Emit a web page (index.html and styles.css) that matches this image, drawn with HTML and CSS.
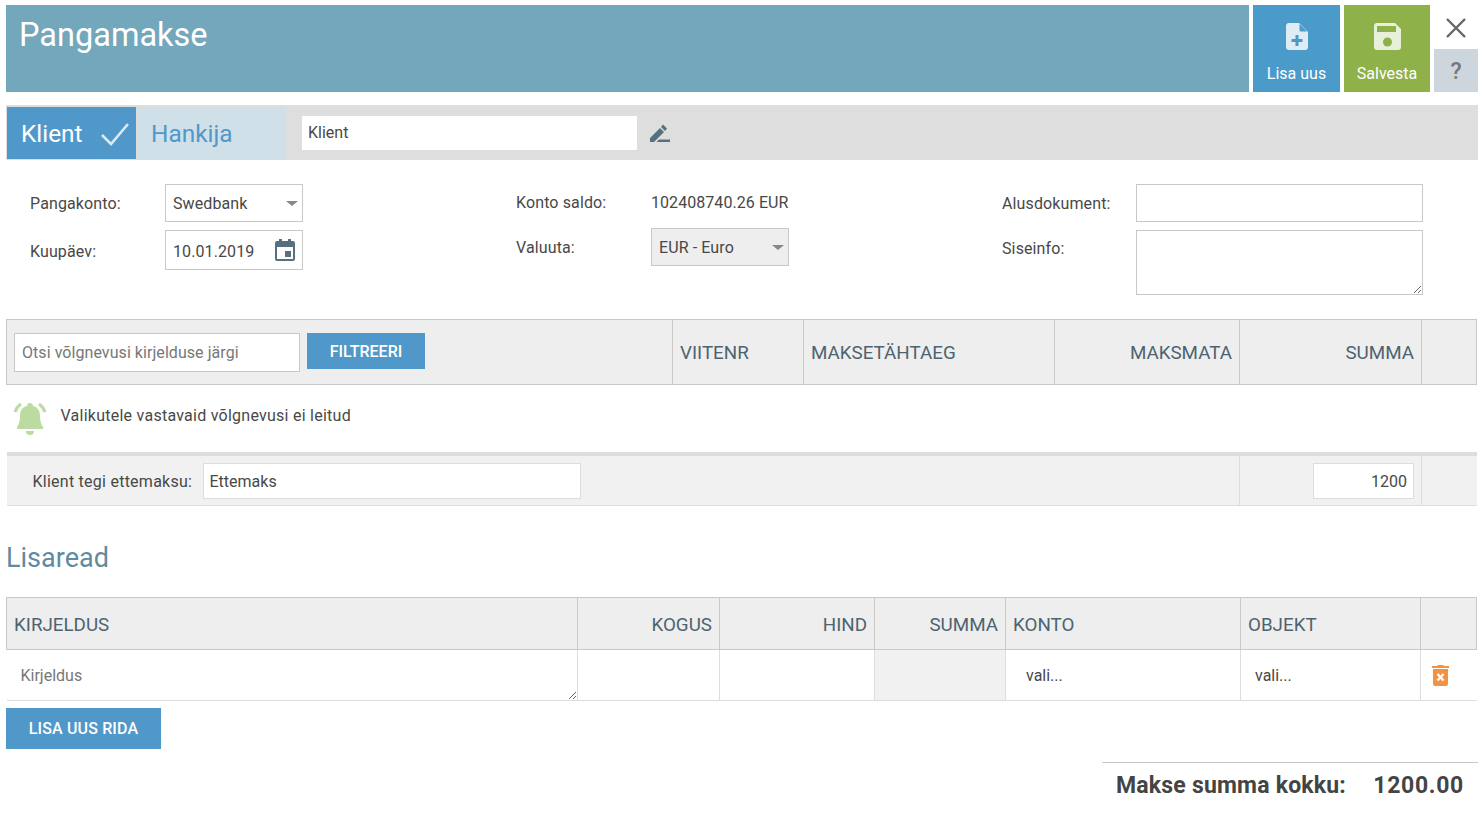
FILE: index.html
```html
<!DOCTYPE html>
<html>

<head>
	<title>Pangamakse</title>
	<meta charset="utf-8">
	<link rel="stylesheet" href="styles.css">
</head>

<body>
	<div class="main">
		<div class="top">
			<h1 class="title">Pangamakse</h1>
			<button class="action blue">
				<svg width="22" height="27" viewBox="0 0 22 27"><path fill="#deecf5" d="M3 0h10l9 9v15a3 3 0 0 1-3 3H3a3 3 0 0 1-3-3V3a3 3 0 0 1 3-3z"/><path fill="#4a9aca" d="M13.500 1l7.500 7.500h-6a1.500 1.500 0 0 1-1.500-1.500z"/><path fill="#4a9aca" d="M9.500 12h3v4h4v3h-4v4h-3v-4h-4v-3h4z"/></svg>
				<span>Lisa uus</span>
			</button>
			<button class="action green">
				<svg width="27" height="27" viewBox="0 0 27 27"><path fill="#e8f0da" d="M3 0h18l6 6v18a3 3 0 0 1-3 3H3a3 3 0 0 1-3-3V3a3 3 0 0 1 3-3z"/><rect fill="#8fb14a" x="3" y="3" width="19" height="6"/><circle fill="#8fb14a" cx="13.500" cy="19" r="4.500"/></svg>
				<span>Salvesta</span>
			</button>
			<div class="side">
				<div class="close">
					<svg width="20" height="20" viewBox="0 0 20 20"><path stroke="#666" stroke-width="2.4" fill="none" d="M1 1l18 18M19 1L1 19"/></svg>
				</div>
				<div class="help">?</div>
			</div>
		</div>

		<div class="tabs">
			<div class="tab on">
				<span>Klient</span>
				<svg width="30" height="24" viewBox="0 0 30 24"><path stroke="#dbe9f3" stroke-width="2.6" fill="none" d="M2 13l9 9L28 2"/></svg>
			</div>
			<div class="tab off">Hankija</div>
			<input class="tabname" type="text" value="Klient">
			<svg class="pen" width="20" height="18" viewBox="0 0 20 18"><path fill="#56707f" d="M0 14L10 4l4 4L4 18H0zM11 3l2-2.500 4 4-2 2.500zM9 15.500h11V18H6.500z"/></svg>
		</div>

		<div class="form">
			<div class="col c1">
				<div class="field f1">
					<label>Pangakonto:</label>
					<div class="select">Swedbank<i class="caret"></i></div>
				</div>
				<div class="field f2">
					<label>Kuupäev:</label>
					<div class="select date">10.01.2019
						<svg width="20" height="22" viewBox="0 0 20 22"><path fill="#56707f" d="M4 0h3v2h6V0h3v2h2a2 2 0 0 1 2 2v16a2 2 0 0 1-2 2H2a2 2 0 0 1-2-2V4a2 2 0 0 1 2-2h2zM2 8v12h16V8z"/><rect fill="#56707f" x="10" y="12" width="6" height="6"/></svg>
					</div>
				</div>
			</div>
			<div class="col c2">
				<div class="field f3">
					<label>Konto saldo:</label>
					<span class="saldo">102408740.26 EUR</span>
				</div>
				<div class="field f4">
					<label>Valuuta:</label>
					<div class="select grey">EUR - Euro<i class="caret"></i></div>
				</div>
			</div>
			<div class="col c3">
				<div class="field f1">
					<label>Alusdokument:</label>
					<input class="wide" type="text">
				</div>
				<div class="field f5">
					<label>Siseinfo:</label>
					<textarea class="wide area"></textarea>
				</div>
			</div>
		</div>

		<table class="grid debts">
			<colgroup>
				<col class="d1"><col class="d2"><col class="d3"><col class="d4"><col class="d5"><col>
			</colgroup>
			<tr class="head">
				<th class="tools">
					<div class="filter">
						<input class="search" type="text" placeholder="Otsi võlgnevusi kirjelduse järgi">
						<button class="btn">FILTREERI</button>
					</div>
				</th>
				<th>VIITENR</th>
				<th>MAKSETÄHTAEG</th>
				<th class="num">MAKSMATA</th>
				<th class="num">SUMMA</th>
				<th></th>
			</tr>
			<tr class="msg">
				<td colspan="6">
					<div class="notice">
						<svg width="34" height="33" viewBox="0 0 34 33"><g fill="#bcdba0"><path d="M17 1a3 3 0 0 1 3 3c5 1 7 5 7 10 0 5 1 8 3 11v2H4v-2c2-3 3-6 3-11 0-5 2-9 7-10a3 3 0 0 1 3-3z"/><path d="M13 29h8a4 4 0 0 1-8 0z"/></g><path stroke="#bcdba0" stroke-width="3" fill="none" d="M8 2C5 4 3 7 2 10M26 2c3 2 5 5 6 8"/></svg>
						<span>Valikutele vastavaid võlgnevusi ei leitud</span>
					</div>
				</td>
			</tr>
			<tr class="prepay">
				<td colspan="4">
					<div class="prepay-in">
						<label>Klient tegi ettemaksu:</label>
						<input class="prepay-text" type="text" value="Ettemaks">
					</div>
				</td>
				<td><input class="prepay-sum" type="text" value="1200"></td>
				<td></td>
			</tr>
		</table>

		<h2 class="sub">Lisaread</h2>

		<table class="grid extra">
			<colgroup>
				<col class="e1"><col class="e2"><col class="e3"><col class="e4"><col class="e5"><col class="e6"><col>
			</colgroup>
			<tr class="head2">
				<th>KIRJELDUS</th>
				<th class="num">KOGUS</th>
				<th class="num">HIND</th>
				<th class="num">SUMMA</th>
				<th>KONTO</th>
				<th>OBJEKT</th>
				<th></th>
			</tr>
			<tr class="line">
				<td class="desc"><textarea class="desc-in" placeholder="Kirjeldus"></textarea></td>
				<td></td>
				<td></td>
				<td class="shade"></td>
				<td class="pick p1">vali...</td>
				<td class="pick p2">vali...</td>
				<td class="trash">
					<svg width="17" height="22" viewBox="0 0 17 22"><path fill="#f59240" d="M1 5h15v15a2 2 0 0 1-2 2H3a2 2 0 0 1-2-2zM0 2h5l1-1h5l1 1h5v2H0z"/><path stroke="#fff" stroke-width="2.4" d="M5.500 10l6 6.500M11.500 10l-6 6.500"/></svg>
				</td>
			</tr>
		</table>

		<button class="btn addrow">LISA UUS RIDA</button>

		<div class="total">
			<span class="total-label">Makse summa kokku:</span>
			<span class="total-sum">1200.00</span>
		</div>
	</div>
</body>

</html>
```

FILE: styles.css
```css
html,
body {
	margin: 0;
	padding: 0;
	border: 0;
}

body {
	background: #fff;
	font-family: Roboto, sans-serif;
	font-size: 16px;
	color: #484848;
}

.main {
	display: flex;
	flex-direction: column;
	padding: 5px 4px 0 6px;
}

input,
textarea,
button {
	font-family: Roboto, sans-serif;
	box-sizing: border-box;
}

label {
	letter-spacing: 0.12px;
}

/* header */
.top {
	display: flex;
	gap: 4px;
	height: 87px;
}

.title {
	flex: 1 0 0;
	margin: 0;
	padding: 10px 13px;
	background: #72a7bc;
	color: #fff;
	font-size: 32.5px;
	font-weight: 400;
	line-height: 40px;
}

.action {
	display: flex;
	flex-direction: column;
	align-items: center;
	width: 87px;
	padding: 18px 0 0;
	border: 0;
	color: #fff;
	font-size: 16px;
}

.action span {
	margin-top: 14px;
	line-height: 20px;
}

.blue {
	background: #4a9aca;
}

.green {
	width: 86px;
	background: #8fb14a;
}

.side {
	display: flex;
	flex-direction: column;
	width: 44px;
}

.close {
	display: flex;
	flex: 0 0 44px;
	justify-content: center;
	align-items: center;
	box-sizing: border-box;
	padding-top: 2px;
}

.help {
	flex: 0 0 43px;
	overflow: hidden;
	background: #cdd5dd;
	color: #777;
	font-size: 23px;
	font-weight: 500;
	line-height: 45px;
	text-align: center;
}

/* tabs */
.tabs {
	display: flex;
	align-items: center;
	height: 55px;
	margin-top: 13px;
	background: #dedede;
}

.tab {
	display: flex;
	align-items: center;
	height: 52px;
	margin-top: 1px;
	padding-top: 1px;
	box-sizing: border-box;
	font-size: 24.4px;
}

.on {
	justify-content: space-between;
	width: 129px;
	margin-left: 1px;
	padding-left: 14px;
	padding-right: 6px;
	background: #5098c9;
	color: #fff;
}

.off {
	width: 149px;
	margin-left: 1px;
	padding-left: 14px;
	background: #cfe0e9;
	color: #5098c9;
}

.tabname {
	width: 335px;
	height: 34px;
	margin-left: 16px;
	padding: 0 6px;
	border: 0;
	background: #fff;
	color: #484848;
	font-size: 16px;
}

.pen {
	margin-left: 13px;
}

/* form */
.form {
	display: flex;
	height: 159px;
}

.col {
	display: flex;
	flex-direction: column;
}

.c1 {
	width: 510px;
	padding: 24px 0 0 24px;
	box-sizing: border-box;
}

.c2 {
	width: 486px;
	padding: 24px 0 0;
	box-sizing: border-box;
}

.c3 {
	padding: 24px 0 0;
}

.field {
	display: flex;
	align-items: center;
}

.c1 label {
	width: 135px;
}

.c2 label {
	width: 135px;
}

.c3 label {
	width: 134px;
}

.f1 {
	height: 38px;
	margin-bottom: 8px;
}

.f2 {
	height: 40px;
}

.f2 label {
	padding-top: 2px;
}

.f3 {
	height: 36px;
	margin-bottom: 8px;
}

.f4 {
	height: 38px;
}

.f5 {
	align-items: flex-start;
}

.f5 label {
	padding-top: 9px;
}

.saldo {
	letter-spacing: 0.06px;
}

.select {
	display: flex;
	justify-content: space-between;
	align-items: center;
	width: 138px;
	height: 100%;
	padding: 0 7px;
	box-sizing: border-box;
	border: 1px solid #c8c8c8;
	letter-spacing: 0.1px;
}

.date {
	padding-top: 2px;
}

.date svg {
	margin-top: -2px;
}

.grey {
	background: #eee;
}

.caret {
	width: 0;
	height: 0;
	margin-right: -3px;
	border-top: 5px solid #888;
	border-left: 6px solid transparent;
	border-right: 6px solid transparent;
}

.wide {
	display: block;
	width: 287px;
	height: 38px;
	margin: 0;
	border: 1px solid #c8c8c8;
}

.area {
	height: 65px;
}

/* tables */
.grid {
	width: 1471px;
	table-layout: fixed;
	border-collapse: collapse;
}

.grid th {
	padding: 2px 7px 0;
	border: 1px solid #c8c8c8;
	background: #eee;
	color: #4d6470;
	font-size: 18.8px;
	font-weight: 400;
	text-align: left;
}

.grid th.tools {
	padding-top: 0;
}

.grid th.num {
	text-align: right;
	padding-right: 7px;
}

.d1 {
	width: 666px;
}

.d2 {
	width: 131px;
}

.d3 {
	width: 251px;
}

.d4 {
	width: 185px;
}

.d5 {
	width: 182px;
}

.head {
	height: 65px;
}

.filter {
	display: flex;
	align-items: center;
	gap: 7px;
}

.search {
	width: 286px;
	height: 39px;
	padding: 0 7px;
	border: 1px solid #c8c8c8;
	background: #fff;
	font-size: 16px;
	letter-spacing: 0.06px;
}

.search::placeholder,
.desc-in::placeholder {
	color: #777;
	opacity: 1;
}

.btn {
	height: 36px;
	padding: 0;
	border: 0;
	background: #5098c9;
	color: #fff;
	font-size: 16px;
	font-weight: 500;
}

.filter .btn {
	width: 118px;
	margin-top: -2px;
}

.msg {
	height: 69px;
}

.notice {
	display: flex;
	align-items: center;
	gap: 14px;
	padding: 0 0 5px 5px;
	letter-spacing: 0.25px;
}

.notice svg {
	margin-top: 6px;
}

.prepay {
	height: 52px;
	background: #f1f1f1;
	border-top: 4px solid #ddd;
	border-bottom: 1px solid #ddd;
}

.prepay td {
	padding-top: 3px;
}

.prepay td:nth-last-child(2),
.prepay td:last-child {
	border-left: 1px solid #ddd;
}

.prepay td:nth-last-child(2) {
	text-align: right;
	padding-right: 7px;
}

.prepay-in {
	display: flex;
	align-items: center;
	padding-left: 25px;
}

.prepay-in label {
	width: 170px;
	letter-spacing: 0.25px;
}

.prepay-text {
	width: 378px;
	height: 36px;
	padding: 0 6px;
	border: 1px solid #ddd;
	font-size: 16px;
	color: #484848;
}

.prepay-sum {
	width: 101px;
	height: 36px;
	padding: 0 6px;
	border: 1px solid #ddd;
	font-size: 16px;
	color: #484848;
	text-align: right;
}

.sub {
	margin: 35px 0 22px;
	color: #5f8aa0;
	font-size: 27px;
	font-weight: 400;
	line-height: 34px;
}

.e1 {
	width: 571px;
}

.e2 {
	width: 142px;
}

.e3 {
	width: 155px;
}

.e4 {
	width: 131px;
}

.e5 {
	width: 235px;
}

.e6 {
	width: 180px;
}

.head2 {
	height: 52px;
}

.line {
	height: 50px;
	border-bottom: 1px solid #ddd;
}

.line td {
	padding: 0;
	border-left: 1px solid #ddd;
}

.line td:first-child {
	border-left: 0;
}

.desc {
	vertical-align: top;
}

.desc-in {
	display: block;
	width: 100%;
	height: 50px;
	padding: 16px 14px 0;
	border: 0;
	outline: 0;
	font-size: 16px;
}

.shade {
	background: #f1f1f1;
}

.line td.p1 {
	padding-left: 20px;
}

.line td.p2 {
	padding-left: 14px;
}

.line td.trash {
	padding: 4px 0 0 11px;
}

.addrow {
	width: 155px;
	height: 41px;
	margin-top: 7px;
	letter-spacing: 0.15px;
}

.total {
	display: flex;
	justify-content: space-between;
	align-self: flex-end;
	box-sizing: border-box;
	width: 376px;
	margin-top: 13px;
	padding: 10px 14px 0;
	border-top: 1px solid #c8c8c8;
	color: #444;
	font-size: 23px;
	font-weight: 700;
	line-height: 25px;
}

.total-label {
	letter-spacing: 0.2px;
}

.total-sum {
	letter-spacing: 0.7px;
}
```
